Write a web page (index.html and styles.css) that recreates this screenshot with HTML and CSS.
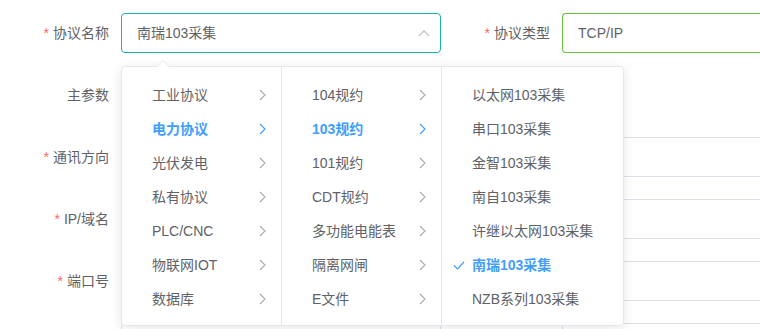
FILE: index.html
```html
<!DOCTYPE html>
<html lang="zh-CN">
<head>
  <meta charset="UTF-8">
  <title>协议配置</title>
  <link rel="stylesheet" href="styles.css">
</head>
<body>
  <div class="form">
    <div class="row">
      <div class="item">
        <label class="label"><i class="req">*</i>协议名称</label>
        <div class="input select is-focus">
          <span>南瑞103采集</span>
          <svg class="caret" width="12" height="8" viewBox="0 0 12 8"><path d="M1 7 L6 2 L11 7" fill="none" stroke="#c0c4cc" stroke-width="1.3"/></svg>
        </div>
      </div>
      <div class="item">
        <label class="label"><i class="req">*</i>协议类型</label>
        <div class="input wide is-ok"><span>TCP/IP</span></div>
      </div>
    </div>
    <div class="row">
      <div class="item">
        <label class="label">主参数</label>
      </div>
    </div>
    <div class="row">
      <div class="item">
        <label class="label"><i class="req">*</i>通讯方向</label>
        <div class="input"></div>
      </div>
      <div class="item">
        <label class="label"></label>
        <div class="input wide"></div>
      </div>
    </div>
    <div class="row">
      <div class="item">
        <label class="label"><i class="req">*</i>IP/域名</label>
        <div class="input"></div>
      </div>
      <div class="item">
        <label class="label"></label>
        <div class="input wide"></div>
      </div>
    </div>
    <div class="row">
      <div class="item">
        <label class="label"><i class="req">*</i>端口号</label>
        <div class="input"></div>
      </div>
      <div class="item">
        <label class="label"></label>
        <div class="input wide"></div>
      </div>
    </div>
    <div class="row">
      <div class="item">
        <label class="label"></label>
        <div class="input"></div>
      </div>
      <div class="item">
        <label class="label"></label>
        <div class="input wide"></div>
      </div>
    </div>
  </div>

  <!-- 级联下拉 -->
  <div class="cascader">
    <span class="arrow"></span>
    <ul class="menu">
      <li>工业协议<svg class="next" width="7" height="12" viewBox="0 0 7 12"><path d="M1 1 L6 6 L1 11" fill="none" stroke="currentColor" stroke-width="1.1"/></svg></li>
      <li class="active">电力协议<svg class="next" width="7" height="12" viewBox="0 0 7 12"><path d="M1 1 L6 6 L1 11" fill="none" stroke="currentColor" stroke-width="1.1"/></svg></li>
      <li>光伏发电<svg class="next" width="7" height="12" viewBox="0 0 7 12"><path d="M1 1 L6 6 L1 11" fill="none" stroke="currentColor" stroke-width="1.1"/></svg></li>
      <li>私有协议<svg class="next" width="7" height="12" viewBox="0 0 7 12"><path d="M1 1 L6 6 L1 11" fill="none" stroke="currentColor" stroke-width="1.1"/></svg></li>
      <li>PLC/CNC<svg class="next" width="7" height="12" viewBox="0 0 7 12"><path d="M1 1 L6 6 L1 11" fill="none" stroke="currentColor" stroke-width="1.1"/></svg></li>
      <li>物联网IOT<svg class="next" width="7" height="12" viewBox="0 0 7 12"><path d="M1 1 L6 6 L1 11" fill="none" stroke="currentColor" stroke-width="1.1"/></svg></li>
      <li>数据库<svg class="next" width="7" height="12" viewBox="0 0 7 12"><path d="M1 1 L6 6 L1 11" fill="none" stroke="currentColor" stroke-width="1.1"/></svg></li>
    </ul>
    <ul class="menu">
      <li>104规约<svg class="next" width="7" height="12" viewBox="0 0 7 12"><path d="M1 1 L6 6 L1 11" fill="none" stroke="currentColor" stroke-width="1.1"/></svg></li>
      <li class="active">103规约<svg class="next" width="7" height="12" viewBox="0 0 7 12"><path d="M1 1 L6 6 L1 11" fill="none" stroke="currentColor" stroke-width="1.1"/></svg></li>
      <li>101规约<svg class="next" width="7" height="12" viewBox="0 0 7 12"><path d="M1 1 L6 6 L1 11" fill="none" stroke="currentColor" stroke-width="1.1"/></svg></li>
      <li>CDT规约<svg class="next" width="7" height="12" viewBox="0 0 7 12"><path d="M1 1 L6 6 L1 11" fill="none" stroke="currentColor" stroke-width="1.1"/></svg></li>
      <li>多功能电能表<svg class="next" width="7" height="12" viewBox="0 0 7 12"><path d="M1 1 L6 6 L1 11" fill="none" stroke="currentColor" stroke-width="1.1"/></svg></li>
      <li>隔离网闸<svg class="next" width="7" height="12" viewBox="0 0 7 12"><path d="M1 1 L6 6 L1 11" fill="none" stroke="currentColor" stroke-width="1.1"/></svg></li>
      <li>E文件<svg class="next" width="7" height="12" viewBox="0 0 7 12"><path d="M1 1 L6 6 L1 11" fill="none" stroke="currentColor" stroke-width="1.1"/></svg></li>
    </ul>
    <ul class="menu last">
      <li>以太网103采集</li>
      <li>串口103采集</li>
      <li>金智103采集</li>
      <li>南自103采集</li>
      <li>许继以太网103采集</li>
      <li class="active"><svg class="check" width="12" height="9" viewBox="0 0 12 9"><path d="M1 4.5 L4.5 8 L11 1" fill="none" stroke="currentColor" stroke-width="1.2"/></svg>南瑞103采集</li>
      <li>NZB系列103采集</li>
    </ul>
  </div>
</body>
</html>
```

FILE: styles.css
```css
html, body { height: 100%; overflow: hidden; }
body { margin: 0; font-family: "Liberation Sans", "Noto Sans CJK SC", sans-serif; font-size: 14px; color: #606266; background: #fff; }
.form { padding-top: 13px; height: 100%; box-sizing: border-box; overflow: hidden; }
.row { display: flex; height: 40px; margin-bottom: 22px; }
.item { display: flex; }
.label { width: 109px; padding-right: 12px; text-align: right; line-height: 40px; color: #606266; }
.req { font-style: normal; color: #f56c6c; margin-right: 4px; }
.input { position: relative; box-sizing: border-box; width: 320px; height: 40px; border: 1px solid #dcdfe6; border-radius: 4px; padding: 0 15px; line-height: 38px; color: #606266; }
.input.wide { width: 198px; border-right: 0; border-top-right-radius: 0; border-bottom-right-radius: 0; }
.is-focus { border-color: #1ab3a0; }
.is-ok { border-color: #67c23a; }
.caret { position: absolute; right: 10px; top: 15px; }

.cascader { position: absolute; left: 121px; top: 66px; display: flex; background: #fff; border: 1px solid #e4e7ed; border-radius: 4px; box-shadow: 0 2px 12px 0 rgba(0,0,0,.1); }
.arrow { position: absolute; left: 35px; top: -7px; width: 0; height: 0; border: 6px solid transparent; border-top: 0; border-bottom-color: #e4e7ed; }
.arrow::after { content: ""; position: absolute; left: -6px; top: 1px; border: 6px solid transparent; border-top: 0; border-bottom-color: #fff; }
.menu { list-style: none; margin: 0; padding: 11px 0 9px; min-width: 160px; box-sizing: border-box; border-right: 1px solid #e4e7ed; }
.menu.last { border-right: 0; min-width: 180px; }
.menu li { position: relative; height: 34px; line-height: 34px; padding: 0 30px 0 30px; white-space: nowrap; color: #606266; }
.menu li.active { color: #409eff; font-weight: bold; }
.next { position: absolute; right: 15px; top: 11px; color: #a8abb2; }
.active .next { color: #409eff; }
.check { position: absolute; left: 11px; top: 13px; color: #409eff; }
```
